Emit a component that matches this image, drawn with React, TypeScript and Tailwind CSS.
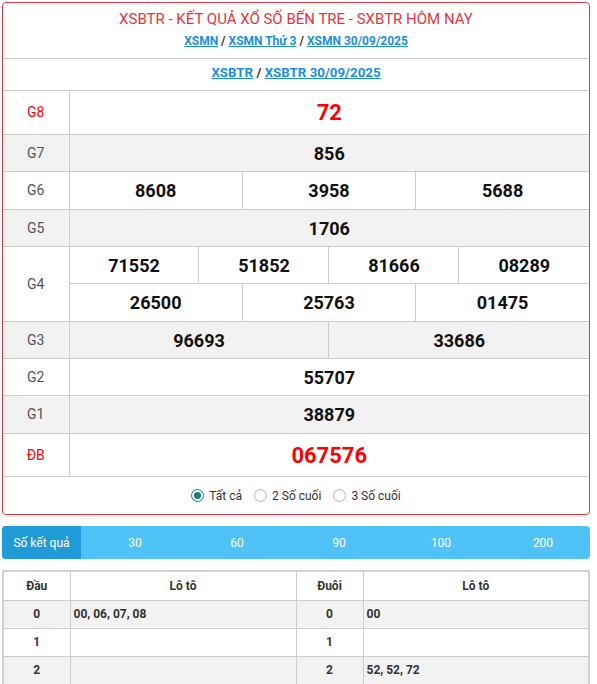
const g4Top = ["71552", "51852", "81666", "08289"]
const g4Bottom = ["26500", "25763", "01475"]

const loto = [
  { dau: "0", left: "00, 06, 07, 08", duoi: "0", right: "00" },
  { dau: "1", left: "", duoi: "1", right: "" },
  { dau: "2", left: "", duoi: "2", right: "52, 52, 72" },
  { dau: "3", left: "", duoi: "3", right: "" },
  { dau: "4", left: "", duoi: "4", right: "" },
]

function Label({ children, red, rowSpan }: { children: React.ReactNode; red?: boolean; rowSpan?: number }) {
  return (
    <td
      rowSpan={rowSpan}
      className={`border-r border-b border-[#cccccc] text-center text-[14px] ${red ? "text-[#ff0000]" : "text-[#555555]"}`}
    >
      {children}
    </td>
  )
}

function Num({ children, span, big }: { children: React.ReactNode; span: number; big?: boolean }) {
  return (
    <td
      colSpan={span}
      className={`border-r border-b border-[#cccccc] last:border-r-0 text-center font-bold ${big ? "text-[22px] text-[#ff0000]" : "text-[18px] text-[#111111]"}`}
    >
      {children}
    </td>
  )
}

function Radio({ label, checked }: { label: string; checked?: boolean }) {
  return (
    <label className="flex items-center gap-[5px]">
      <span
        className={`flex h-[13px] w-[13px] items-center justify-center rounded-full border ${checked ? "border-[#1a7f78]" : "border-[#b5b5b5]"}`}
      >
        {checked && <span className="h-[7px] w-[7px] rounded-full bg-[#1a7f78]" />}
      </span>
      <span>{label}</span>
    </label>
  )
}

export default function App() {
  return (
    <div
      className="h-screen overflow-y-scroll bg-white [&::-webkit-scrollbar]:w-[5px] [&::-webkit-scrollbar-thumb]:bg-[#8c8c8c]"
      style={{ fontFamily: "Roboto, 'Liberation Sans', sans-serif" }}
    >
      <div className="w-[588px] pl-[2px] pt-[2px] box-content">
        <div className="rounded-[4px] border border-[#e13a48] shadow-[0_2px_4px_rgba(0,0,0,0.08)] overflow-hidden">
          <div className="flex h-[55px] flex-col items-center pt-[6px]">
            <h1 className="text-[15px] leading-[20px] text-[#e0353f]">
              XSBTR - KẾT QUẢ XỔ SỐ BẾN TRE - SXBTR HÔM NAY
            </h1>
            <div className="mt-[3px] text-[12px] font-bold text-[#1b8fd9]">
              <a className="underline">XSMN</a>
              <span className="text-[#333]"> / </span>
              <a className="underline">XSMN Thứ 3</a>
              <span className="text-[#333]"> / </span>
              <a className="underline">XSMN 30/09/2025</a>
            </div>
          </div>
          <div className="flex h-[32px] items-start justify-center border-t border-[#cccccc] pt-[5px] text-[13.3px] leading-[18px] font-bold text-[#1b8fd9]">
            <a className="underline">XSBTR</a>
            <span className="whitespace-pre text-[#333]"> / </span>
            <a className="underline">XSBTR 30/09/2025</a>
          </div>
          <table className="w-full table-fixed border-collapse border-t border-[#cccccc]">
            <colgroup>
              <col className="w-[66px]" />
              {Array.from({ length: 12 }).map((_, i) => (
                <col key={i} />
              ))}
            </colgroup>
            <tbody>
              <tr className="h-[44px]">
                <Label red>G8</Label>
                <Num span={12} big>72</Num>
              </tr>
              <tr className="h-[37px] bg-[#f2f2f2]">
                <Label>G7</Label>
                <Num span={12}>856</Num>
              </tr>
              <tr className="h-[38px]">
                <Label>G6</Label>
                <Num span={4}>8608</Num>
                <Num span={4}>3958</Num>
                <Num span={4}>5688</Num>
              </tr>
              <tr className="h-[37px] bg-[#f2f2f2]">
                <Label>G5</Label>
                <Num span={12}>1706</Num>
              </tr>
              <tr className="h-[37px]">
                <Label rowSpan={2}>G4</Label>
                {g4Top.map((n) => (
                  <Num key={n} span={3}>{n}</Num>
                ))}
              </tr>
              <tr className="h-[38px]">
                {g4Bottom.map((n) => (
                  <Num key={n} span={4}>{n}</Num>
                ))}
              </tr>
              <tr className="h-[37px] bg-[#f2f2f2]">
                <Label>G3</Label>
                <Num span={6}>96693</Num>
                <Num span={6}>33686</Num>
              </tr>
              <tr className="h-[37px]">
                <Label>G2</Label>
                <Num span={12}>55707</Num>
              </tr>
              <tr className="h-[38px] bg-[#f2f2f2]">
                <Label>G1</Label>
                <Num span={12}>38879</Num>
              </tr>
              <tr className="h-[43px]">
                <Label red>ĐB</Label>
                <Num span={12} big>067576</Num>
              </tr>
            </tbody>
          </table>
          <div className="flex h-[37px] items-center justify-center gap-[12px] text-[12px] text-[#333333]">
            <Radio label="Tất cả" checked />
            <Radio label="2 Số cuối" />
            <Radio label="3 Số cuối" />
          </div>
        </div>

        <div className="mt-[11px] flex h-[33px] overflow-hidden rounded-[4px] bg-[#4fc3f7] text-[12px] text-white">
          <div className="flex w-[79px] shrink-0 items-center justify-center bg-[#1f9bd7]">Số kết quả</div>
          <div className="ml-[3px] flex">
            {["30", "60", "90", "100", "200"].map((n) => (
              <div key={n} className="flex w-[102px] shrink-0 items-center justify-center">
                {n}
              </div>
            ))}
          </div>
        </div>

        <table className="mt-[11px] w-[588px] table-fixed border-collapse border-2 border-[#d0d0d0] text-[12px] font-bold text-[#333333]">
          <colgroup>
            <col className="w-[67px]" />
            <col className="w-[226px]" />
            <col className="w-[67px]" />
            <col />
          </colgroup>
          <thead>
            <tr className="h-[29px]">
              <th className="border border-[#cccccc] font-bold">Đầu</th>
              <th className="border border-[#cccccc] font-bold">Lô tô</th>
              <th className="border border-[#cccccc] font-bold">Đuôi</th>
              <th className="border border-[#cccccc] font-bold">Lô tô</th>
            </tr>
          </thead>
          <tbody>
            {loto.map((r, i) => (
              <tr key={r.dau} className={`h-[28px] ${i % 2 === 0 ? "bg-[#f2f2f2]" : "bg-white"}`}>
                <td className="border border-[#cccccc] text-center">{r.dau}</td>
                <td className="border border-[#cccccc] px-[3px]">{r.left}</td>
                <td className="border border-[#cccccc] text-center">{r.duoi}</td>
                <td className="border border-[#cccccc] px-[3px]">{r.right}</td>
              </tr>
            ))}
          </tbody>
        </table>
      </div>
    </div>
  )
}
